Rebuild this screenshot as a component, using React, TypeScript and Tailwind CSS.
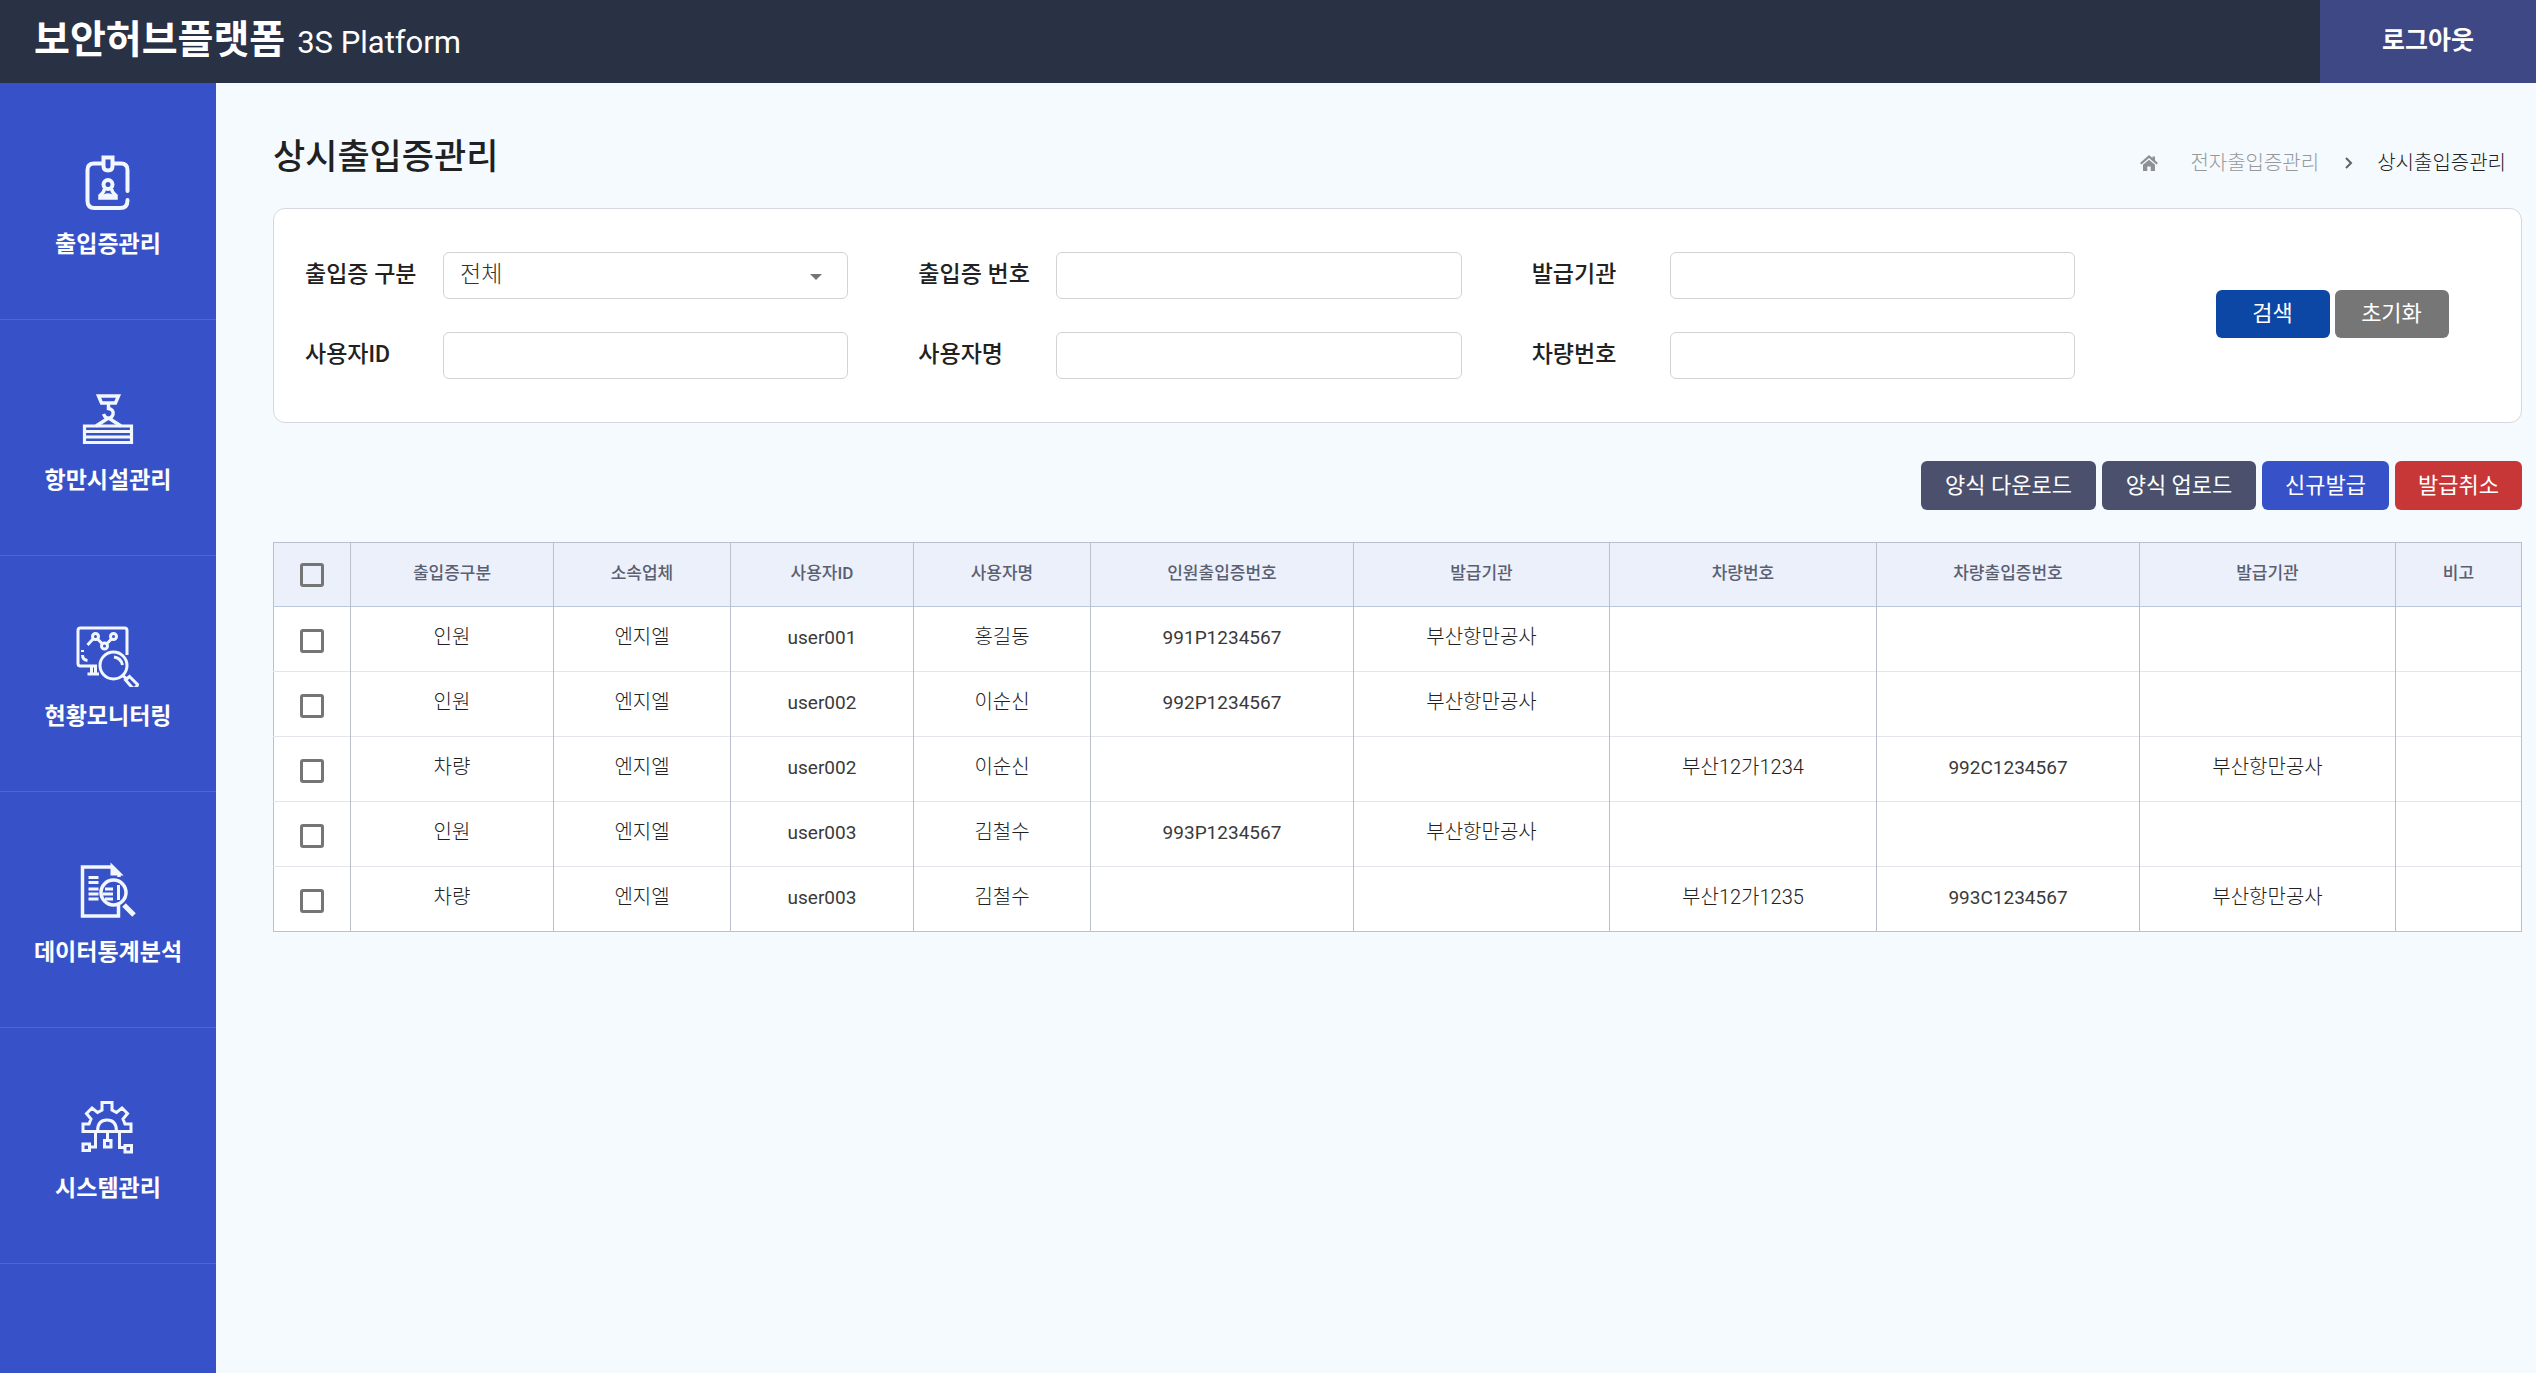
import React from 'react';

type IconProps = { children: React.ReactNode };

function MenuIcon({ children }: IconProps) {
  return (
    <svg viewBox="0 0 64 64" className="size-16" fill="none" stroke="#f2f6ff" strokeWidth={3} aria-hidden="true">
      {children}
    </svg>
  );
}

const PassIcon = () => (
  <MenuIcon>
    <g strokeWidth={4}>
      <path d="M26 12.500h-8q-6.500 0-6.500 6.500V50q0 7 7 7h25.500q7.500 0 7.500-7.500V49M51.500 40V19q0-6.500-6.500-6.500h-8" strokeLinecap="round" />
      <path d="M27.500 6.500h9V15q0 4.500-4.500 4.500T27.500 15z" />
      <circle cx="32" cy="33.500" r="4.500" />
      <path d="M28 37.500q1 3-4 7V47h16V44.500q-5-4-4-7M27 46q5-4 10 0" strokeWidth={3.500} />
    </g>
  </MenuIcon>
);

const HarborIcon = () => (
  <MenuIcon>
    <path d="M22.500 9h20l-3 7h-14zM32.500 17v4.500q5.500 1 4.500 6-1.500 4.500-6 3.500-2.500-1-3.500-4M32.500 31L20 39M32.500 31l12.500 8" strokeWidth={3.400} />
    <path d="M8.500 39h47v16.500h-47zM9 44.500h46M9 50h46" strokeWidth={3.200} />
  </MenuIcon>
);

const MonitorIcon = () => (
  <MenuIcon>
    <g strokeWidth={3}>
      <path d="M21 43H4.500Q2 43 2 40.500V7.500Q2 5 4.500 5h44Q51 5 51 7.500V32M15.500 43v8M11.500 51h11.500M19.500 43v8" />
      <circle cx="19.500" cy="13.500" r="3" />
      <circle cx="28.500" cy="23" r="3" />
      <circle cx="37.500" cy="13.500" r="3" />
      <path d="M17 16l-5.500 6M21.500 16l5 5M30.500 21l5.500-5.500M6.500 27v2M6.500 32q0 5 5 5.500" />
      <circle cx="37.500" cy="42.500" r="13.500" />
      <path d="M38 34q7 1 8.500 8M46.500 52.500l4.500 3.500M49.500 57l4-3.500 8 8q-1 4-4.500 4z" />
    </g>
  </MenuIcon>
);

const ReportIcon = () => (
  <MenuIcon>
    <path d="M43 18v-3l-7-7H6.500v49H42.500V46" strokeWidth={3.500} />
    <path d="M36 7v8h8z" fill="#f2f6ff" />
    <path d="M12.500 18.500h10M12.500 23.500h10M12.500 30h10M12.500 35h10M12.500 40h10M29 30h8M27 35h10M29 40h8" strokeWidth={2.800} />
    <path d="M42.500 26v15" />
    <circle cx="37.500" cy="33.500" r="12.500" strokeWidth={3.500} />
    <path d="M48 46l10 10" strokeWidth={5} />
  </MenuIcon>
);

const SystemIcon = () => (
  <MenuIcon>
    <path d="M7 36.500v-7.500h6l2-5-4.500-5.500 5.500-5.500 5.500 4.500 4.500-2.500V7.500h10V15l4.500 2.500 5.500-4.500 5.500 5.500-4.500 5.500 2 5h6v7.500z" />
    <path d="M21.500 36.500q0-11.500 9.500-11.500t9.500 11.500M19.500 37v15h-5M31.500 37v8M43.500 37v15.500H49" />
    <path d="M7 49h6.500v6.500H7zM28.500 45.500H35v6.500h-6.500zM49 50.500h6.500V57H49z" />
  </MenuIcon>
);

const MENU = [
  { label: '출입증관리', Icon: PassIcon },
  { label: '항만시설관리', Icon: HarborIcon },
  { label: '현황모니터링', Icon: MonitorIcon },
  { label: '데이터통계분석', Icon: ReportIcon },
  { label: '시스템관리', Icon: SystemIcon },
];

const FIELDS = ['출입증 구분', '출입증 번호', '발급기관', '사용자ID', '사용자명', '차량번호'];

const COLUMNS = [
  { label: '출입증구분', width: 203 },
  { label: '소속업체', width: 177 },
  { label: '사용자ID', width: 183 },
  { label: '사용자명', width: 177 },
  { label: '인원출입증번호', width: 263 },
  { label: '발급기관', width: 256 },
  { label: '차량번호', width: 267 },
  { label: '차량출입증번호', width: 263 },
  { label: '발급기관', width: 256 },
  { label: '비고', width: 126 },
];
const CHECK_WIDTH = 77;
const TOTAL = COLUMNS.reduce((sum, c) => sum + c.width, CHECK_WIDTH);

const ROWS = [
  ['인원', '엔지엘', 'user001', '홍길동', '991P1234567', '부산항만공사', '', '', '', ''],
  ['인원', '엔지엘', 'user002', '이순신', '992P1234567', '부산항만공사', '', '', '', ''],
  ['차량', '엔지엘', 'user002', '이순신', '', '', '부산12가1234', '992C1234567', '부산항만공사', ''],
  ['인원', '엔지엘', 'user003', '김철수', '993P1234567', '부산항만공사', '', '', '', ''],
  ['차량', '엔지엘', 'user003', '김철수', '', '', '부산12가1235', '993C1234567', '부산항만공사', ''],
];

const isLatin = (text: string) => /^[\x20-\x7e]*$/.test(text);

function Check({ label }: { label: string }) {
  return (
    <input
      type="checkbox"
      aria-label={label}
      className="mx-auto block size-6 appearance-none rounded-[3px] border-3 border-[#757575] checked:bg-[#3752c8]"
    />
  );
}

export default function App() {
  return (
    <div className="flex min-h-screen flex-col bg-[#f5fafe] font-['Roboto','Noto_Sans_CJK_KR',sans-serif] text-[#212121]">
      <header className="flex h-[83px] items-stretch justify-between bg-[#293145] text-white">
        <div className="flex items-center gap-3 pb-0.5 pl-[34px]">
          <span className="text-[39px] leading-none font-bold">보안허브플랫폼</span>
          <span className="pt-1 text-[31px] leading-none">3S Platform</span>
        </div>
        <button type="button" className="w-[216px] bg-[#3d4884] pb-0.5 text-[25px] font-bold">
          로그아웃
        </button>
      </header>

      <div className="flex flex-1">
        <nav className="w-[216px] shrink-0 bg-[#3752c8] pt-px">
          {MENU.map(({ label, Icon }) => (
            <a
              key={label}
              href="#"
              className="flex h-[236px] flex-col items-center gap-3.5 border-b border-[#4b68d6] pt-[67px] text-[23px] leading-8 font-bold text-white"
            >
              <Icon />
              {label}
            </a>
          ))}
        </nav>

        <main className="min-w-0 flex-1 pr-[14px] pl-[57px]">
          <div className="flex h-[125px] items-center justify-between pt-6">
            <h1 className="text-[35px] leading-none font-medium">상시출입증관리</h1>
            <div className="flex items-center pt-2.5 pr-4 text-[20px] leading-7 font-light">
              <a href="#" aria-label="홈" className="mr-8">
                <svg viewBox="0 0 18 18" className="size-[18px]" fill="#8e9096" aria-hidden="true">
                  <path d="M9 1L0 9l1.500 1.500L9 4l7.500 6.500L18 9l-3-2.700V2.500h-2.500v1.600zM3 10.800V17h4.300v-4.500h3.400V17H15v-6.200L9 5.700z" />
                </svg>
              </a>
              <a href="#" className="text-[#96989c]">
                전자출입증관리
              </a>
              <svg viewBox="0 0 8 12" className="mr-6 ml-[26px] h-3 w-2" fill="none" stroke="#5f6166" strokeWidth={2} aria-hidden="true">
                <path d="M1 1l5 5-5 5" />
              </svg>
              <span>상시출입증관리</span>
            </div>
          </div>

          <form className="grid grid-cols-[1fr_376px] items-center rounded-xl border border-[#d5d7de] bg-white py-[43px]">
            <div className="grid grid-cols-3 gap-y-[33px] pl-[31px]">
              {FIELDS.map((field, i) => (
                <div key={field} className="flex items-center pr-[70px]">
                  <label htmlFor={`field-${i}`} className="w-[138px] shrink-0 pb-0.5 text-[23px] leading-8 font-medium">
                    {field}
                  </label>
                  {i === 0 ? (
                    <div className="relative min-w-0 flex-1">
                      <select
                        id={`field-${i}`}
                        className="block h-[47px] w-full appearance-none rounded-md border border-[#d2d3d6] bg-white px-4 text-[23px] font-light text-[#333]"
                      >
                        <option>전체</option>
                      </select>
                      <svg viewBox="0 0 12 6" className="pointer-events-none absolute top-[22px] right-[26px] h-1.5 w-3" fill="#757575" aria-hidden="true">
                        <path d="M0 0h12L6 6z" />
                      </svg>
                    </div>
                  ) : (
                    <input
                      id={`field-${i}`}
                      type="text"
                      className="h-[47px] min-w-0 flex-1 rounded-md border border-[#d2d3d6] bg-white px-4 text-[23px]"
                    />
                  )}
                </div>
              ))}
            </div>
            <div className="flex justify-center gap-[5px] pr-0.5 pb-1 text-[22px] text-white">
              <button type="button" className="h-12 w-[114px] rounded-md bg-[#0d47a6]">
                검색
              </button>
              <button type="reset" className="h-12 w-[114px] rounded-md bg-[#767676]">
                초기화
              </button>
            </div>
          </form>

          <div className="mt-[38px] flex justify-end gap-1.5 text-[22px] text-white">
            <button type="button" className="h-[49px] w-[175px] rounded-md bg-[#4b516d]">
              양식 다운로드
            </button>
            <button type="button" className="h-[49px] w-[154px] rounded-md bg-[#4b516d]">
              양식 업로드
            </button>
            <button type="button" className="h-[49px] w-[127px] rounded-md bg-[#3752c8]">
              신규발급
            </button>
            <button type="button" className="h-[49px] w-[127px] rounded-md bg-[#c83737]">
              발급취소
            </button>
          </div>

          <table className="mt-8 w-full table-fixed border-collapse border border-[#bcc0cc] bg-white text-center">
            <colgroup>
              <col style={{ width: `${(CHECK_WIDTH / TOTAL) * 100}%` }} />
              {COLUMNS.map((c, i) => (
                <col key={i} style={{ width: `${(c.width / TOTAL) * 100}%` }} />
              ))}
            </colgroup>
            <thead>
              <tr className="h-16 border-b border-[#bcc6da] bg-[#ebf0fb] text-[17px] text-[#5a6072]">
                <th className="border-r border-[#bcc0cc]">
                  <Check label="전체 선택" />
                </th>
                {COLUMNS.map((c, i) => (
                  <th key={i} className="border-r border-[#bcc0cc] pb-0.5 font-medium">
                    {c.label}
                  </th>
                ))}
              </tr>
            </thead>
            <tbody>
              {ROWS.map((row, r) => (
                <tr key={r} className="h-[65px] border-b border-[#e3e5ea] last:border-[#bcc0cc]">
                  <td className="border-r border-[#bcc0cc] pt-1">
                    <Check label={`${r + 1}행 선택`} />
                  </td>
                  {row.map((cell, c) => (
                    <td
                      key={c}
                      className={
                        isLatin(cell)
                          ? 'border-r border-[#bcc0cc] pb-0.5 text-[19px] text-[#3a3a3a]'
                          : 'border-r border-[#bcc0cc] pb-1 text-[20px] font-light'
                      }
                    >
                      {cell}
                    </td>
                  ))}
                </tr>
              ))}
            </tbody>
          </table>
        </main>
      </div>
    </div>
  );
}
